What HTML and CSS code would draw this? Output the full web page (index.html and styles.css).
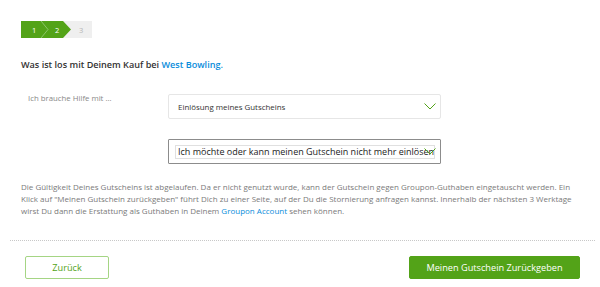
FILE: index.html
```html
<!DOCTYPE html>
<html lang="de">
<head>
<meta charset="utf-8">
<link rel="stylesheet" href="styles.css">
</head>
<body>
<div class="page">
  <div class="steps">
    <svg class="steps-svg" width="71" height="17" viewBox="0 0 71 17">
      <rect x="0" y="0" width="71" height="17" fill="#efefef"/>
      <polygon points="0,0 42,0 50,8.5 42,17 0,17" fill="#53a318"/>
      <polyline points="20,0 27,8.5 20,17" fill="none" stroke="#8cc56a" stroke-width="1"/>
      <text x="11" y="11.5" class="step-num">1</text>
      <text x="34" y="11.5" class="step-num">2</text>
      <text x="58" y="11.5" class="step-num grey">3</text>
    </svg>
  </div>

  <h1 class="title">Was ist los mit Deinem Kauf bei <span class="link">West Bowling.</span></h1>

  <div class="form">
    <div class="label">Ich brauche Hilfe mit ...</div>
    <div class="select">
      <span>Einlösung meines Gutscheins</span>
      <svg class="chev" width="12" height="7" viewBox="0 0 12 7"><polyline points="0.5,0.5 6,6 11.5,0.5" fill="none" stroke="#53a318" stroke-width="1"/></svg>
    </div>
    <div></div>
    <div class="native">
      <span class="native-inner">Ich möchte oder kann meinen Gutschein nicht mehr einlösen</span>
      <svg class="chev chev2" width="12" height="7" viewBox="0 0 12 7"><polyline points="0.5,0.5 6,6 11.5,0.5" fill="none" stroke="#53a318" stroke-width="1"/></svg>
    </div>
  </div>

  <p class="info">Die Gültigkeit Deines Gutscheins ist abgelaufen. Da er nicht genutzt wurde, kann der Gutschein gegen Groupon-Guthaben eingetauscht werden. Ein Klick auf "Meinen Gutschein zurückgeben" führt Dich zu einer Seite, auf der Du die Stornierung anfragen kannst. Innerhalb der nächsten 3 Werktage wirst Du dann die Erstattung als Guthaben in Deinem <span class="link">Groupon Account</span> sehen können.</p>

  <div class="divider"></div>

  <div class="actions">
    <button class="btn btn-outline">Zurück</button>
    <button class="btn btn-primary">Meinen Gutschein Zurückgeben</button>
  </div>
</div>
</body>
</html>
```

FILE: styles.css
```css
html, body {
  margin: 0;
  padding: 0;
  background: #fff;
  font-family: "Open Sans", "Liberation Sans", sans-serif;
  color: #333;
}
.page {
  padding: 21px 0 0 0;
}
.steps {
  padding-left: 21px;
  height: 17px;
  display: flex;
}
.steps-svg { display: block; }
.step-num {
  font-family: "Open Sans", sans-serif;
  font-size: 7.5px;
  fill: #fff;
}
.step-num.grey { fill: #b5b5b5; }
.title {
  margin: 20px 0 0 21px;
  font-size: 9.1px;
  font-weight: 600;
  color: #333;
  line-height: 14px;
}
.link { color: #0a8ddb; }
.form {
  display: grid;
  grid-template-columns: 140px 273px;
  row-gap: 20px;
  margin: 22px 0 0 28px;
}
.label {
  font-size: 7.8px;
  color: #888;
  line-height: 10px;
  margin-top: -1px;
}
.select {
  height: 25px;
  box-sizing: border-box;
  border: 1px solid #e6e6e6;
  border-radius: 2px;
  display: flex;
  align-items: center;
  justify-content: space-between;
  padding: 0 4px 0 9px;
  font-size: 7.9px;
  color: #333;
}
.chev { display: block; }
.native {
  position: relative;
  height: 25px;
  box-sizing: border-box;
  border: 1px solid #8c8c8c;
  border-radius: 1px;
  display: flex;
  align-items: center;
  padding: 0 6px 0 6px;
}
.native-inner {
  flex: 1;
  border: 1px solid #e0e0e0;
  font-size: 9px;
  color: #222;
  line-height: 12px;
  padding: 0 0 0 2px;
  white-space: nowrap;
  overflow: visible;
}
.chev2 {
  position: absolute;
  right: 4px;
  top: 8px;
}
.info {
  margin: 17px 0 0 21px;
  width: 556px;
  font-size: 8px;
  line-height: 12px;
  color: #7a7a7a;
}
.divider {
  margin: 23px 5px 0 10px;
  border-top: 1px dotted #c8c8c8;
}
.actions {
  display: flex;
  justify-content: space-between;
  padding: 15px 20px 0 25px;
}
.btn {
  font-family: "Open Sans", sans-serif;
  height: 23px;
  box-sizing: border-box;
  border-radius: 2px;
  font-size: 9.2px;
  cursor: pointer;
}
.btn-outline {
  width: 84px;
  background: #fff;
  border: 1px solid #a5d584;
  color: #53a318;
}
.btn-primary {
  width: 171px;
  background: #53a318;
  border: 1px solid #53a318;
  color: #fff;
}
```
